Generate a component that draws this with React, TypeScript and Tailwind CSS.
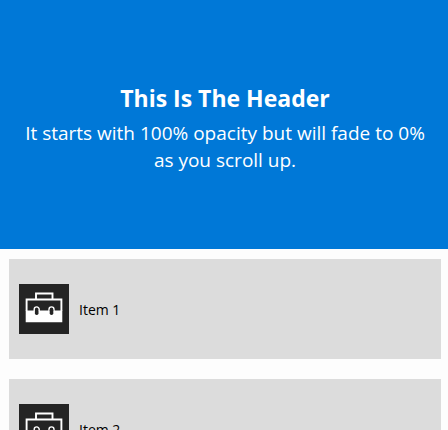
const items = ["Item 1", "Item 2"];

function BriefcaseIcon() {
  return (
    <svg viewBox="0 0 50 50" className="size-[50px] shrink-0 bg-[#242424]" aria-hidden="true">
      <path d="M17 15V9.5h16.5V15" fill="none" stroke="#fff" strokeWidth="1.9" />
      <path d="M7.6 27V15.5h34.8V27" fill="none" stroke="#fff" strokeWidth="1.9" />
      <path d="M6.7 26.5h36.6v11.8H6.7z" fill="#fff" />
      <rect x="15.9" y="24.6" width="3.6" height="6.4" rx="1.7" fill="#242424" />
      <path d="M15.2 27v-1.6a2.5 2.5 0 0 1 5 0V27M30 27v-1.6a2.5 2.5 0 0 1 5 0V27" fill="none" stroke="#fff" strokeWidth="1.4" />
      <rect x="30.7" y="24.6" width="3.6" height="6.4" rx="1.7" fill="#242424" />
    </svg>
  );
}

export default function App() {
  return (
    <div className="h-screen overflow-hidden bg-[#fdfdfd] font-['Open_Sans','Noto_Sans',sans-serif]">
      <header className="flex flex-col items-center bg-[#0078d7] pt-[84px] pr-4 pb-[75px] pl-[18px] text-center text-white">
        <h1 className="text-[23px] leading-7 font-bold">This Is The Header</h1>
        <p className="mt-2 text-[19px] leading-[27px]">
          It starts with 100% opacity but will fade to 0% as you scroll up.
        </p>
      </header>
      <ul className="flex flex-col gap-5 py-2.5 pr-[7px] pl-[9px]">
        {items.map((item) => (
          <li key={item} className="flex h-[100px] items-center gap-2.5 bg-[#dcdcdc] px-2.5 text-sm text-black">
            <BriefcaseIcon />
            <span className="pt-px">{item}</span>
          </li>
        ))}
      </ul>
    </div>
  );
}
